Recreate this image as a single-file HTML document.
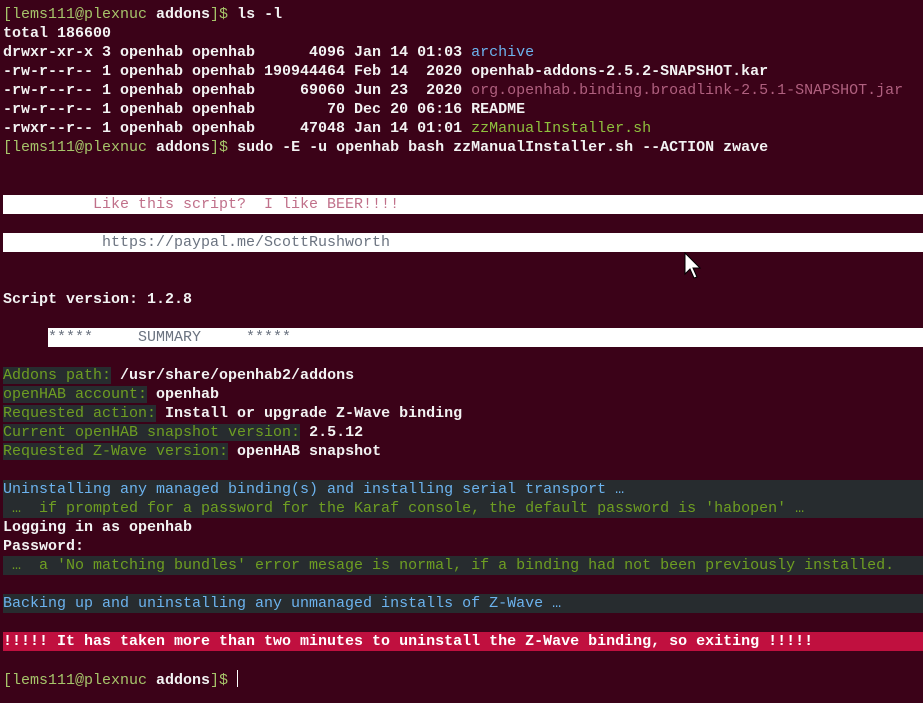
<!DOCTYPE html>
<html><head><meta charset="utf-8"><style>
html,body{margin:0;padding:0;background:#3b0218;width:923px;height:703px;overflow:hidden}
.t{position:absolute;left:0;top:5px;width:923px;font-family:"Liberation Mono",monospace;font-size:15px;line-height:19px;color:#f2f2f2;font-weight:bold}
.r{height:19px;padding-left:3px;white-space:pre}
.p{color:#a6c46a;font-weight:normal}
.b{color:#6cb3ee;font-weight:normal}
.pk{color:#b0607f;font-weight:normal}
.g{color:#8fc03e;font-weight:normal}
.wb{background:#fff;margin-left:3px;padding-left:0}
.lk{color:#c0708a;font-weight:normal}
.gr{color:#6b7380;font-weight:normal}
.lb{background:#272c2f;color:#6e9e22;font-weight:normal}
.gb{background:#272c2f;margin-left:3px;padding-left:0}
.bl{color:#6cb3ee;font-weight:normal}
.gt{color:#6e9e22;font-weight:normal}
.red{background:#c0103f;margin-left:3px;padding-left:0;color:#fff}
.cur{display:inline-block;width:1px;height:17px;background:#fff;vertical-align:-3px}
</style></head><body>
<div class="t">
<div class="r"><span class="p">[lems111@plexnuc</span> addons<span class="p">]$</span> ls -l</div>
<div class="r">total 186600</div>
<div class="r">drwxr-xr-x 3 openhab openhab      4096 Jan 14 01:03 <span class="b">archive</span></div>
<div class="r">-rw-r--r-- 1 openhab openhab 190944464 Feb 14  2020 openhab-addons-2.5.2-SNAPSHOT.kar</div>
<div class="r">-rw-r--r-- 1 openhab openhab     69060 Jun 23  2020 <span class="pk">org.openhab.binding.broadlink-2.5.1-SNAPSHOT.jar</span></div>
<div class="r">-rw-r--r-- 1 openhab openhab        70 Dec 20 06:16 README</div>
<div class="r">-rwxr--r-- 1 openhab openhab     47048 Jan 14 01:01 <span class="g">zzManualInstaller.sh</span></div>
<div class="r"><span class="p">[lems111@plexnuc</span> addons<span class="p">]$</span> sudo -E -u openhab bash zzManualInstaller.sh --ACTION zwave</div>
<div class="r"></div>
<div class="r"></div>
<div class="r wb"><span class="lk">          Like this script?  I like BEER!!!!</span></div>
<div class="r"></div>
<div class="r wb"><span class="gr">           https://paypal.me/ScottRushworth</span></div>
<div class="r"></div>
<div class="r"></div>
<div class="r">Script version: 1.2.8</div>
<div class="r"></div>
<div class="r" style="padding-left:0"><div style="margin-left:48px;background:#fff;height:19px"><span class="gr">*****     SUMMARY     *****</span></div></div>
<div class="r"></div>
<div class="r"><span class="lb">Addons path:</span> /usr/share/openhab2/addons</div>
<div class="r"><span class="lb">openHAB account:</span> openhab</div>
<div class="r"><span class="lb">Requested action:</span> Install or upgrade Z-Wave binding</div>
<div class="r"><span class="lb">Current openHAB snapshot version:</span> 2.5.12</div>
<div class="r"><span class="lb">Requested Z-Wave version:</span> openHAB snapshot</div>
<div class="r"></div>
<div class="r gb"><span class="bl">Uninstalling any managed binding(s) and installing serial transport …</span></div>
<div class="r gb"><span class="gt"> …  if prompted for a password for the Karaf console, the default password is 'habopen' …</span></div>
<div class="r">Logging in as openhab</div>
<div class="r">Password:</div>
<div class="r gb"><span class="gt"> …  a 'No matching bundles' error mesage is normal, if a binding had not been previously installed.</span></div>
<div class="r"></div>
<div class="r gb"><span class="bl">Backing up and uninstalling any unmanaged installs of Z-Wave …</span></div>
<div class="r"></div>
<div class="r red">!!!!! It has taken more than two minutes to uninstall the Z-Wave binding, so exiting !!!!!</div>
<div class="r"></div>
<div class="r"><span class="p">[lems111@plexnuc</span> addons<span class="p">]$</span> <span class="cur"></span></div>
</div>
<svg style="position:absolute;left:684px;top:252px" width="18" height="28" viewBox="0 0 18 28"><path d="M1 1 L1 22 L6 17 L10 26 L13 25 L9 16 L16 16 Z" fill="#fff" stroke="#000" stroke-width="1"/></svg>
</body></html>
